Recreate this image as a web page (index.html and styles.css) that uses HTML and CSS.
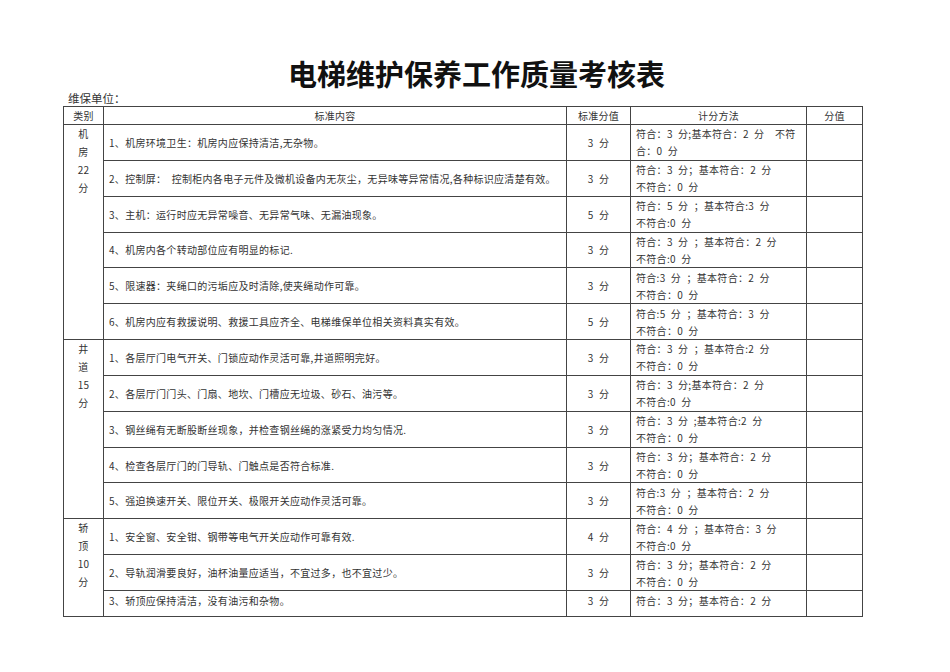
FILE: index.html
```html
<!DOCTYPE html>
<html lang="zh-CN">
<head>
<meta charset="utf-8">
<title>电梯维护保养工作质量考核表</title>
<link rel="stylesheet" href="styles.css">
</head>
<body>
<div class="page">
  <h1 class="title">电梯维护保养工作质量考核表</h1>
  <div class="unit">维保单位：</div>
  <table class="sheet">
    <colgroup>
      <col class="c-cat"><col class="c-item"><col class="c-std"><col class="c-method"><col class="c-score">
    </colgroup>
    <thead>
      <tr class="head">
        <th>类别</th><th>标准内容</th><th>标准分值</th><th>计分方法</th><th>分值</th>
      </tr>
    </thead>
    <tbody>
      <tr>
        <td class="cat" rowspan="6">机<br>房<br>22<br>分</td>
        <td class="item">1、机房环境卫生：机房内应保持清洁,无杂物。</td>
        <td class="std">3&ensp;分</td>
        <td class="method">符合：3&ensp;分;基本符合：2&ensp;分&ensp;&ensp;不符<br>合：0&ensp;分</td>
        <td class="score"></td>
      </tr>
      <tr>
        <td class="item">2、控制屏：&ensp;控制柜内各电子元件及微机设备内无灰尘，无异味等异常情况,各种标识应清楚有效。</td>
        <td class="std">3&ensp;分</td>
        <td class="method">符合：3&ensp;分；基本符合：2&ensp;分<br>不符合：0&ensp;分</td>
        <td class="score"></td>
      </tr>
      <tr>
        <td class="item">3、主机：运行时应无异常噪音、无异常气味、无漏油现象。</td>
        <td class="std">5&ensp;分</td>
        <td class="method">符合：5&ensp;分&ensp;；基本符合:3&ensp;分<br>不符合:0&ensp;分</td>
        <td class="score"></td>
      </tr>
      <tr>
        <td class="item">4、机房内各个转动部位应有明显的标记.</td>
        <td class="std">3&ensp;分</td>
        <td class="method">符合：3&ensp;分&ensp;；基本符合：2&ensp;分<br>不符合:0&ensp;分</td>
        <td class="score"></td>
      </tr>
      <tr>
        <td class="item">5、限速器：夹绳口的污垢应及时清除,使夹绳动作可靠。</td>
        <td class="std">3&ensp;分</td>
        <td class="method">符合:3&ensp;分&ensp;；基本符合：2&ensp;分<br>不符合：0&ensp;分</td>
        <td class="score"></td>
      </tr>
      <tr>
        <td class="item">6、机房内应有救援说明、救援工具应齐全、电梯维保单位相关资料真实有效。</td>
        <td class="std">5&ensp;分</td>
        <td class="method">符合:5&ensp;分&ensp;；基本符合：3&ensp;分<br>不符合：0&ensp;分</td>
        <td class="score"></td>
      </tr>
      <tr>
        <td class="cat" rowspan="5">井<br>道<br>15<br>分</td>
        <td class="item">1、各层厅门电气开关、门锁应动作灵活可靠,井道照明完好。</td>
        <td class="std">3&ensp;分</td>
        <td class="method">符合：3&ensp;分&ensp;；基本符合:2&ensp;分<br>不符合：0&ensp;分</td>
        <td class="score"></td>
      </tr>
      <tr>
        <td class="item">2、各层厅门门头、门扇、地坎、门槽应无垃圾、砂石、油污等。</td>
        <td class="std">3&ensp;分</td>
        <td class="method">符合：3&ensp;分;基本符合：2&ensp;分<br>不符合:0&ensp;分</td>
        <td class="score"></td>
      </tr>
      <tr>
        <td class="item">3、钢丝绳有无断股断丝现象，并检查钢丝绳的涨紧受力均匀情况.</td>
        <td class="std">3&ensp;分</td>
        <td class="method">符合：3&ensp;分&ensp;;基本符合:2&ensp;分<br>不符合：0&ensp;分</td>
        <td class="score"></td>
      </tr>
      <tr>
        <td class="item">4、检查各层厅门的门导轨、门触点是否符合标准.</td>
        <td class="std">3&ensp;分</td>
        <td class="method">符合：3&ensp;分；基本符合：2&ensp;分<br>不符合：0&ensp;分</td>
        <td class="score"></td>
      </tr>
      <tr>
        <td class="item">5、强迫换速开关、限位开关、极限开关应动作灵活可靠。</td>
        <td class="std">3&ensp;分</td>
        <td class="method">符合:3&ensp;分&ensp;；基本符合：2&ensp;分<br>不符合：0&ensp;分</td>
        <td class="score"></td>
      </tr>
      <tr>
        <td class="cat" rowspan="3">轿<br>顶<br>10<br>分</td>
        <td class="item">1、安全窗、安全钳、钢带等电气开关应动作可靠有效.</td>
        <td class="std">4&ensp;分</td>
        <td class="method">符合：4&ensp;分&ensp;；基本符合：3&ensp;分<br>不符合:0&ensp;分</td>
        <td class="score"></td>
      </tr>
      <tr>
        <td class="item">2、导轨润滑要良好，油杯油量应适当，不宜过多，也不宜过少。</td>
        <td class="std">3&ensp;分</td>
        <td class="method">符合：3&ensp;分；基本符合：2&ensp;分<br>不符合：0&ensp;分</td>
        <td class="score"></td>
      </tr>
      <tr class="cut">
        <td class="item">3、轿顶应保持清洁，没有油污和杂物。</td>
        <td class="std">3&ensp;分</td>
        <td class="method">符合：3&ensp;分；基本符合：2&ensp;分</td>
        <td class="score"></td>
      </tr>
    </tbody>
  </table>
</div>
</body>
</html>
```
FILE: styles.css
```css
html, body {
  margin: 0;
  padding: 0;
  background: #ffffff;
}

body {
  font-family: "Noto Sans CJK SC", "Liberation Serif", serif;
  color: #333333;
}

.page {
  width: 799px;
  margin-left: 63px;
  padding-top: 55px;
}

.title {
  margin: 0;
  padding-left: 28px;
  height: 36px;
  font-size: 29px;
  line-height: 36px;
  font-weight: 700;
  color: #111111;
  text-align: center;
  white-space: nowrap;
}

.unit {
  height: 15px;
  padding-left: 5px;
  font-size: 11.5px;
  line-height: 14px;
  color: #333333;
}

.sheet {
  width: 799px;
  border-collapse: collapse;
  table-layout: fixed;
  font-size: 10px;
  line-height: 17px;
  letter-spacing: 0.3px;
}

.c-cat { width: 40px; }
.c-item { width: 463px; }
.c-std { width: 64px; }
.c-method { width: 176px; }
.c-score { width: 56px; }

.sheet th,
.sheet td {
  border: 1px solid #444444;
  padding: 0;
  white-space: nowrap;
  overflow: hidden;
}

.sheet th {
  font-weight: 400;
  text-align: center;
  height: 17px;
}

.sheet tbody tr {
  height: 35.85px;
}

.sheet .cat {
  vertical-align: top;
  text-align: center;
  line-height: 18px;
}

.sheet .item {
  padding-left: 5px;
  vertical-align: middle;
}

.sheet .std {
  text-align: center;
  vertical-align: middle;
}

.sheet .method {
  padding-left: 5px;
  vertical-align: middle;
}

.sheet tbody tr.cut {
  height: 26.5px;
}

.sheet tr.cut td {
  vertical-align: top;
  padding-top: 1px;
}
```
